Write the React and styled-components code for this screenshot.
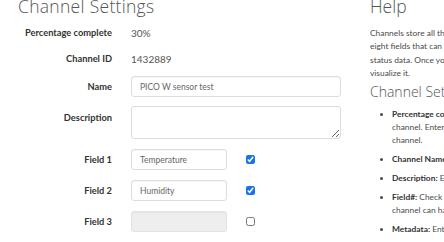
import React from "react";
import styled, { createGlobalStyle } from "styled-components";

const Global = createGlobalStyle`
  body {
    margin: 0;
    background: #fff;
    font-family: Lato, "Liberation Sans", sans-serif;
    overflow: hidden;
  }
`;

const Page = styled.div`
  display: flex;
  gap: 24px;
  width: 444px;
  height: 242px;
  overflow: hidden;
  padding-left: 18px;
  box-sizing: border-box;
`;

const LeftCol = styled.div`
  width: 328px;
  flex: none;
`;

const RightCol = styled.div`
  width: 520px;
  flex: none;
  color: #4a4a4a;
`;

const Title = styled.h1`
  margin: -5px 0 0 0;
  height: 27px;
  font-family: "Open Sans", sans-serif;
  font-weight: 300;
  font-size: 17.5px;
  line-height: 22px;
  color: #555;
  letter-spacing: 0.3px;
`;

const FormRow = styled.div`
  display: grid;
  grid-template-columns: 94px 1fr;
  column-gap: 19px;
  align-items: ${(p) => (p.$top ? "start" : "center")};
  min-height: 21px;
  margin-bottom: ${(p) => p.$mb ?? 10}px;
`;

const Label = styled.label`
  text-align: right;
  font-weight: bold;
  font-size: 9.3px;
  color: #333;
  padding-top: ${(p) => (p.$top ? "6px" : "0")};
`;

const Value = styled.div`
  font-size: 10px;
  color: #555;
`;

const Controls = styled.div`
  display: flex;
  align-items: center;
  gap: 19px;
`;

const Input = styled.input`
  box-sizing: border-box;
  width: ${(p) => p.$w || 210}px;
  height: 21px;
  border: 1px solid #ddd;
  border-radius: 3px;
  padding: 0 8px;
  font-family: inherit;
  font-size: 8.5px;
  color: #666;
  background: #fff;
  box-shadow: inset 0 1px 1px rgba(0, 0, 0, 0.04);
  outline: none;

  &:disabled {
    background: #eee;
    border-color: #e3e3e3;
  }
`;

const TextArea = styled.textarea`
  box-sizing: border-box;
  width: 210px;
  height: 33px;
  border: 1px solid #ddd;
  border-radius: 3px;
  padding: 4px 8px;
  font-family: inherit;
  font-size: 8.5px;
  resize: vertical;
  outline: none;
  display: block;
`;

const Check = styled.input`
  width: 9px;
  height: 9px;
  margin: 0;
  accent-color: #1a73e8;
`;

const HelpTitle = styled.h2`
  margin: -5px 0 0 0;
  height: 22px;
  font-family: "Open Sans", sans-serif;
  font-weight: 300;
  font-size: 17.5px;
  line-height: 22px;
  color: #555;
`;

const Para = styled.p`
  margin: 10px 0 0 0;
  font-size: 8.4px;
  line-height: 13.4px;
  white-space: nowrap;
`;

const SubTitle = styled.h3`
  margin: 1px 0 0 0;
  font-family: "Open Sans", sans-serif;
  font-weight: 300;
  font-size: 14px;
  line-height: 20px;
  color: #555;
`;

const List = styled.ul`
  margin: 6px 0 0 0;
  padding-left: 22px;
  font-size: 8.4px;
  line-height: 13px;
  white-space: nowrap;
`;

const Item = styled.li`
  margin-bottom: 6px;
  & b {
    color: #333;
  }
`;

const fields = [
  { n: 1, value: "Temperature", on: true },
  { n: 2, value: "Humidity", on: true },
  { n: 3, value: "", on: false },
];

export default function App() {
  return (
    <>
      <Global />
      <Page>
        <LeftCol>
          <Title>Channel Settings</Title>
          <FormRow $mb={5}>
            <Label>Percentage complete</Label>
            <Value>30%</Value>
          </FormRow>
          <FormRow $mb={7}>
            <Label>Channel ID</Label>
            <Value>1432889</Value>
          </FormRow>
          <FormRow $mb={9}>
            <Label>Name</Label>
            <Input defaultValue="PICO W sensor test" />
          </FormRow>
          <FormRow $top>
            <Label $top>Description</Label>
            <TextArea />
          </FormRow>
          {fields.map((f) => (
            <FormRow key={f.n}>
              <Label>Field {f.n}</Label>
              <Controls>
                <Input $w={96} defaultValue={f.value} disabled={!f.on} />
                <Check type="checkbox" defaultChecked={f.on} />
              </Controls>
            </FormRow>
          ))}
        </LeftCol>
        <RightCol>
          <HelpTitle>Help</HelpTitle>
          <Para>
            Channels store all the data that a ThingSpeak application collects. Each channel includes
            <br />
            eight fields that can hold any type of data, plus three fields for location data and one for
            <br />
            status data. Once you collect data in a channel, you can use ThingSpeak apps to analyze and
            <br />
            visualize it.
          </Para>
          <SubTitle>Channel Settings</SubTitle>
          <List>
            <Item>
              <b>Percentage complete:</b> Calculated based on data entered into the various fields of a
              <br />
              channel. Enter the name, description, location, URL, video, and tags to complete your
              <br />
              channel.
            </Item>
            <Item>
              <b>Channel Name:</b> Enter a unique name for the ThingSpeak channel.
            </Item>
            <Item>
              <b>Description:</b> Enter a description of the ThingSpeak channel.
            </Item>
            <Item>
              <b>Field#:</b> Check the box to enable the field, and enter a field name. Each ThingSpeak
              <br />
              channel can have up to 8 fields.
            </Item>
            <Item>
              <b>Metadata:</b> Enter information about channel data, including JSON, XML, or CSV data.
            </Item>
          </List>
        </RightCol>
      </Page>
    </>
  );
}
